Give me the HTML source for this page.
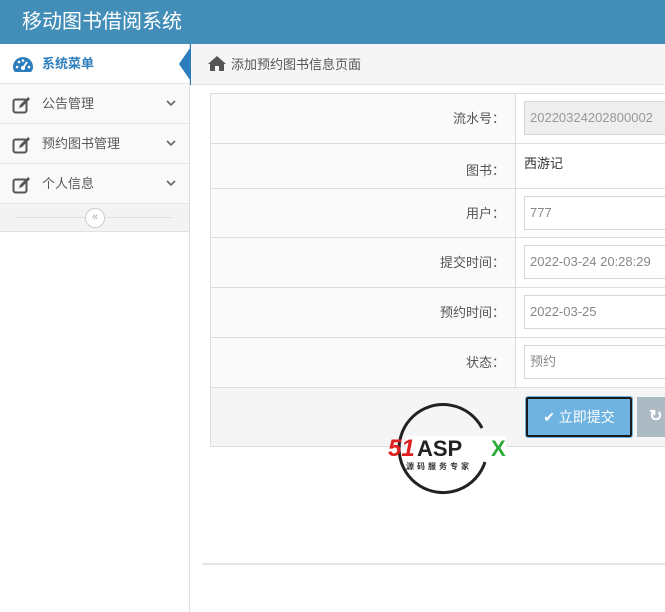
<!DOCTYPE html>
<html><head><meta charset="utf-8"><style>
*{margin:0;padding:0;box-sizing:border-box}
body{width:665px;height:612px;overflow:hidden;background:#fff;font-family:"Liberation Sans","Noto Sans CJK SC",sans-serif;font-size:13px;color:#333;position:relative}
.hd{position:absolute;left:0;top:0;width:665px;height:44px;background:#438eb9;color:#fff;font-size:20px;line-height:44px;padding-left:22px}
.sb{position:absolute;left:0;top:44px;width:190px;height:568px;background:#fff;border-right:1px solid #ddd}
.it{height:40px;border-bottom:1px solid #e5e5e5;background:#f9f9f9;line-height:39px;padding-left:42px;position:relative;color:#585858}
.it svg{position:absolute;left:12px;top:12px}
.act{background:#fff;color:#2b7dbc;font-weight:bold}
.col{height:28px;background:#f3f3f3;border-bottom:1px solid #e0e0e0;position:relative}
.col:before{content:"";position:absolute;left:16px;right:16px;top:13px;border-top:1px solid #e0e0e0}
.col span{position:absolute;left:85px;top:4px;width:20px;height:20px;border:1px solid #ccc;border-radius:50%;background:#fff;font-size:11px;text-align:center;line-height:17px;color:#aaa}
.bc{position:absolute;left:191px;top:44px;width:474px;height:41px;background:#f5f5f5;border-bottom:1px solid #e5e5e5;line-height:41px;padding-left:40px;color:#555}
.bc svg{position:absolute;left:17px;top:12px}
.arr{position:absolute;left:179px;top:48px;width:0;height:0;border-top:16px solid transparent;border-bottom:16px solid transparent;border-right:11px solid #2b7dbc}
.arr2{position:absolute;left:190px;top:44px;width:2px;height:41px;background:#2b7dbc}
.tb{position:absolute;left:210px;top:93px;width:460px;border:1px solid #ddd;border-right:none}
.r{display:flex;border-bottom:1px solid #ddd}
.r:last-child{border-bottom:none}
.l{width:305px;text-align:right;padding-right:10px;background:#fafafa;border-right:1px solid #ddd;color:#555}
.v{flex:1;padding-left:8px;background:#fff}
.in{margin-top:7px;height:34px;border:1px solid #d5d5d5;line-height:32px;padding-left:5px;color:#888;font-size:13px}
.dis{background:#eee;color:#999}
.btn{position:absolute;left:526px;top:397px;width:106px;height:40px;background:#6fb3e0;border:2px solid #1a1a1a;outline:1px solid #6fb3e0;color:#fff;font-size:14px;line-height:36px;text-align:center;border-radius:2px}
.btn2{position:absolute;left:637px;top:397px;width:40px;height:40px;background:#abbac3;color:#fff;line-height:40px;padding-left:12px;font-weight:bold;font-size:16px}
.hr{position:absolute;left:202px;top:563px;width:463px;border-top:2px solid #e5e5e5}
</style></head><body>
<div class="hd">移动图书借阅系统</div>
<div class="sb">
<div class="it act"><svg width="22" height="18" viewBox="0 0 22 18"><path d="M11 1A10 10 0 0 0 1 11q0 3 2 5h16q2-2 2-5A10 10 0 0 0 11 1z" fill="#2b7dbc"/><circle cx="11" cy="12" r="2" fill="#fff"/><path d="M11 12l4-6" stroke="#fff" stroke-width="2"/><circle cx="5" cy="11" r="1.3" fill="#fff"/><circle cx="17" cy="11" r="1.3" fill="#fff"/><circle cx="7" cy="6" r="1.3" fill="#fff"/><circle cx="11" cy="4.5" r="1.3" fill="#fff"/></svg>系统菜单</div>
<div class="it"><svg width="20" height="18" viewBox="0 0 20 18"><rect x="1.5" y="3.5" width="13" height="13" rx="2" fill="none" stroke="#555" stroke-width="2"/><path d="M7 12l1-3 8-8 2 2-8 8z" fill="#555"/></svg>公告管理<svg width="10" height="7" viewBox="0 0 10 7" style="left:auto;right:13px;top:16px"><path d="M1 1l4 4 4-4" fill="none" stroke="#666" stroke-width="1.6"/></svg></div>
<div class="it"><svg width="20" height="18" viewBox="0 0 20 18"><rect x="1.5" y="3.5" width="13" height="13" rx="2" fill="none" stroke="#555" stroke-width="2"/><path d="M7 12l1-3 8-8 2 2-8 8z" fill="#555"/></svg>预约图书管理<svg width="10" height="7" viewBox="0 0 10 7" style="left:auto;right:13px;top:16px"><path d="M1 1l4 4 4-4" fill="none" stroke="#666" stroke-width="1.6"/></svg></div>
<div class="it"><svg width="20" height="18" viewBox="0 0 20 18"><rect x="1.5" y="3.5" width="13" height="13" rx="2" fill="none" stroke="#555" stroke-width="2"/><path d="M7 12l1-3 8-8 2 2-8 8z" fill="#555"/></svg>个人信息<svg width="10" height="7" viewBox="0 0 10 7" style="left:auto;right:13px;top:16px"><path d="M1 1l4 4 4-4" fill="none" stroke="#666" stroke-width="1.6"/></svg></div>
<div class="col"><span>«</span></div>
</div>
<div class="arr2"></div><div class="arr"></div>
<div class="bc"><svg width="18" height="15" viewBox="0 0 18 15"><path d="M9 0L0 8h2v7h5v-5h4v5h5V8h2z" fill="#555"/></svg>添加预约图书信息页面</div>
<div class="tb">
<div class="r" style="height:50px"><div class="l" style="line-height:50px">流水号：</div><div class="v"><div class="in dis">20220324202800002</div></div></div>
<div class="r" style="height:45px"><div class="l" style="line-height:54px">图书：</div><div class="v" style="padding-top:9px;padding-left:8px;color:#333">西游记</div></div>
<div class="r" style="height:49px"><div class="l" style="line-height:49px">用户：</div><div class="v"><div class="in">777</div></div></div>
<div class="r" style="height:50px"><div class="l" style="line-height:50px">提交时间：</div><div class="v"><div class="in">2022-03-24 20:28:29</div></div></div>
<div class="r" style="height:50px"><div class="l" style="line-height:50px">预约时间：</div><div class="v"><div class="in">2022-03-25</div></div></div>
<div class="r" style="height:50px"><div class="l" style="line-height:50px">状态：</div><div class="v"><div class="in">预约</div></div></div>
<div class="r" style="height:58px;background:#f5f5f5"><div class="l" style="background:#f5f5f5;border-right:none"></div><div class="v" style="background:#f5f5f5"></div></div>
</div>
<div class="btn">✔ 立即提交</div>
<div class="btn2">↻</div>
<svg style="position:absolute;left:386px;top:400px" width="130" height="95" viewBox="0 0 130 95">
<path d="M96 28A44 44 0 1 0 99 62" fill="none" stroke="#222" stroke-width="3"/>
<rect x="20" y="36" width="100" height="22" fill="#fff"/>
<text x="2" y="56" font-family="Liberation Sans" font-weight="bold" font-style="italic" font-size="24" fill="#e02020">51</text>
<text x="31" y="56" font-family="Liberation Sans" font-weight="bold" font-size="22" fill="#222">ASP</text>
<text x="105" y="56" font-family="Liberation Sans" font-weight="bold" font-size="22" fill="#2eaa3a">X</text>
<text x="20" y="69" font-family="Liberation Sans,Noto Sans CJK SC,sans-serif" font-size="8" font-weight="bold" fill="#333" letter-spacing="3">源码服务专家</text>
</svg>
<div class="hr"></div>
</body></html>
